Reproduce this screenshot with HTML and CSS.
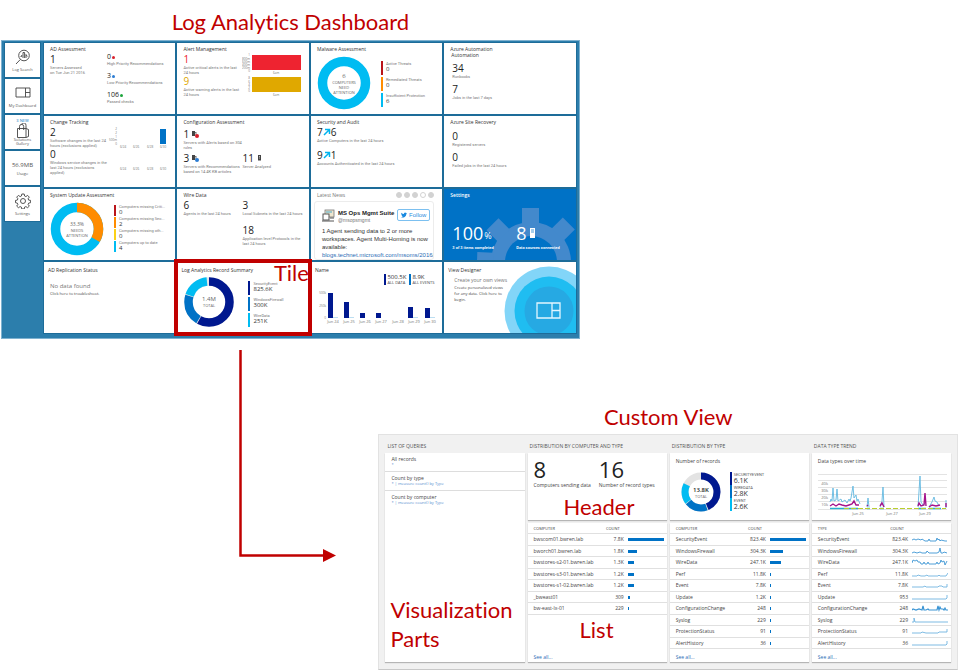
FILE: index.html
```html
<!DOCTYPE html>
<html lang="en">
<head>
<meta charset="utf-8">
<title>Log Analytics Dashboard</title>
<link rel="stylesheet" href="styles.css">
</head>
<body>
<section class="upper">
<h1 class="label title">Log Analytics Dashboard</h1>
<div class="dashboard">
<nav class="side">
  <a href="#"><svg width="16" height="16" viewBox="0 0 16 16" fill="none" stroke="#444" stroke-width=".9"><circle cx="9" cy="6.500" r="5.300"/><path d="M5.300 10.500L1 15M5.500 7.500h1.200V6M8 9V3.500h1.600V9M11 9V5.500l1.300 2"/></svg><span>Log Search</span></a>
  <a href="#"><svg width="16" height="16" viewBox="0 0 16 16" fill="none" stroke="#444" stroke-width=".9"><path d="M1 3h14v9H1zM10.500 3v9M10.500 7.500H15"/></svg><span>My Dashboard</span></a>
  <a href="#" class="gallery"><em>3 NEW</em><svg width="14" height="15" viewBox="0 0 14 15" fill="none" stroke="#444" stroke-width=".9"><path d="M1.500 5.500h8.500v9H1.500zM10 5.500l2.500 1v7L10 14.500M3.500 7V3.500a2 2 0 0 1 4.200 0V7M5.500 1.800a2 2 0 0 1 4.500.8v3"/></svg><span>Solutions<br>Gallery</span></a>
  <a href="#" class="usage"><b>56.9MB</b><span>Usage</span></a>
  <a href="#"><svg width="16" height="16" viewBox="0 0 16 16" fill="none" stroke="#444" stroke-width=".9"><circle cx="8" cy="8" r="2.500"/><path d="M6.800 1h2.400l.4 2 1.300.6 1.700-1.200 1.700 1.700-1.200 1.700.6 1.300 1.900.3v2.300l-1.900.4-.6 1.300 1.200 1.700-1.700 1.600-1.700-1.100-1.300.5-.4 1.900H6.800l-.4-1.900-1.300-.5-1.700 1.100-1.700-1.600 1.200-1.700-.6-1.300L.5 9.700V7.400l1.800-.3.6-1.300-1.200-1.700 1.700-1.700 1.700 1.200L6.400 3z"/></svg><span>Settings</span></a>
</nav>
<main class="tiles">
  <article class="tile"><h2>AD Assessment</h2><div class="cols">
    <div class="stack first"><div class="stat"><b>1</b><p>Servers Assessed<br>on Tue Jun 21 2016</p></div></div>
    <div class="stack checks">
      <div class="stat"><b>0<i class="dot red"></i></b><p>High Priority Recommendations</p></div>
      <div class="stat"><b>3<i class="dot blue"></i></b><p>Low Priority Recommendations</p></div>
      <div class="stat"><b>106<i class="dot green"></i></b><p>Passed checks</p></div>
    </div></div></article>
  <article class="tile"><h2>Alert Management</h2><div class="cols">
    <div class="stack wide"><div class="stat crit"><b>1</b><p>Active critical alerts in the last<br>24 hours</p></div><div class="stat warn"><b>9</b><p>Active warning alerts in the last<br>24 hours</p></div></div>
    <svg class="chart" width="61" height="46" viewBox="0 0 61 46"><rect x="10" y="2" width="49" height="15" fill="#ee2330"/><rect x="10" y="24" width="49" height="15" fill="#e0a800"/><g text-anchor="end"><text x="8" y="3">1</text><text x="8" y="7">800m</text><text x="8" y="10">600m</text><text x="8" y="13">400m</text><text x="8" y="16">200m</text><text x="8" y="19">0</text><text x="8" y="26">8</text><text x="8" y="30">6</text><text x="8" y="33">4</text><text x="8" y="36">2</text><text x="8" y="39">0</text></g><text x="31" y="21">6am</text><text x="31" y="43">6am</text></svg></div></article>
  <article class="tile"><h2>Malware Assessment</h2><div class="cols ring">
    <svg width="54" height="54" viewBox="0 0 54 54"><circle cx="27" cy="27" r="21.500" fill="none" stroke="#00bcf2" stroke-width="9.500"/><g class="core"><text x="27" y="22" class="t6">6</text><text x="27" y="28">COMPUTERS</text><text x="27" y="33">NEED</text><text x="27" y="38">ATTENTION</text></g></svg>
    <ul class="legend tall"><li class="c-red">Active Threats<b>0</b></li><li class="c-orange">Remediated Threats<b>0</b></li><li class="c-cyan">Insufficient Protection<b>6</b></li></ul></div></article>
  <article class="tile"><h2>Azure Automation<br><span class="sub">Automation</span></h2><div class="stack apps">
    <div class="stat"><b>34</b><p>Runbooks</p></div><div class="stat"><b>7</b><p>Jobs in the last 7 days</p></div></div></article>

  <article class="tile"><h2>Change Tracking</h2><div class="cols">
    <div class="stack first"><div class="stat"><b>2</b><p>Software changes in the last 24<br>hours (exclusions applied)</p></div><div class="stat"><b>0</b><p>Windows service changes in the<br>last 24 hours (exclusions<br>applied)</p></div></div>
    <svg class="chart" width="64" height="48" viewBox="0 0 64 48"><rect x="53" y="3" width="6" height="15" fill="#0072c6"/><g text-anchor="end"><text x="10" y="4">2</text><text x="10" y="8">2</text><text x="10" y="12">1</text><text x="10" y="15">500m</text><text x="10" y="19">0</text></g><g text-anchor="middle"><text x="16" y="22">6/24</text><text x="29" y="22">6/26</text><text x="43" y="22">6/28</text><text x="56" y="22">6/30</text><text x="16" y="44">6/24</text><text x="29" y="44">6/26</text><text x="43" y="44">6/28</text><text x="56" y="44">6/30</text></g></svg></div></article>
  <article class="tile"><h2>Configuration Assessment</h2><div class="stack config">
    <div class="stat"><b>1<svg width="8" height="8" viewBox="0 0 8 8"><path d="M1 1h3v5H1z" fill="#444"/><path d="M4 3l1-1v3" stroke="#777" fill="none"/><circle cx="6" cy="6" r="2" fill="#d9202c"/></svg></b><p>Servers with Alerts based on 304<br>rules</p></div>
    <div class="cols"><div class="stat half"><b>3<svg width="8" height="8" viewBox="0 0 8 8"><path d="M1 1h3v5H1z" fill="#444"/><path d="M4 3l1-1v3" stroke="#777" fill="none"/><circle cx="6" cy="6" r="2" fill="#2b7cd3"/></svg></b><p>Servers with Recommendations<br>based on 14.4K KB articles</p></div><div class="stat"><b>11<svg width="8" height="8" viewBox="0 0 8 8"><path d="M2 1h3v5.500H2z" fill="#444"/><path d="M3 2.500h1M3 4h1" stroke="#fff" stroke-width=".6"/></svg></b><p>Server Analyzed</p></div></div></div></article>
  <article class="tile"><h2>Security and Audit</h2><div class="stack audit">
    <div class="stat"><b>7<svg width="8" height="8" viewBox="0 0 8 8"><path d="M1 7l5-5M2 1.500h4.500V6" stroke="#00b4ef" stroke-width="1.500" fill="none"/></svg>6</b><p>Active Computers in the last 24 hours</p></div>
    <div class="stat"><b>9<svg width="8" height="8" viewBox="0 0 8 8"><path d="M1 7l5-5M2 1.500h4.500V6" stroke="#00b4ef" stroke-width="1.500" fill="none"/></svg>1</b><p>Accounts Authenticated in the last 24 hours</p></div></div></article>
  <article class="tile"><h2>Azure Site Recovery</h2><div class="stack apps">
    <div class="stat"><b>0</b><p>Registered servers</p></div><div class="stat"><b>0</b><p>Failed jobs in the last 24 hours</p></div></div></article>

  <article class="tile"><h2>System Update Assessment</h2><div class="cols ring">
    <svg width="54" height="54" viewBox="0 0 54 54"><g fill="none" stroke-width="9.500" transform="rotate(-90 27 27)"><circle cx="27" cy="27" r="21.500" stroke="#00bcf2"/><circle cx="27" cy="27" r="21.500" stroke="#ff8c00" pathLength="360" stroke-dasharray="120 240"/></g><g class="core"><text x="27" y="24" class="t5">33.3%</text><text x="27" y="30">NEEDS</text><text x="27" y="35">ATTENTION</text></g></svg>
    <ul class="legend short"><li class="c-red">Computers missing Criti...<b>0</b></li><li class="c-orange">Computers missing Sec...<b>2</b></li><li class="c-yellow">Computers missing oth...<b>0</b></li><li class="c-cyan">Computers up to date<b>4</b></li></ul></div></article>
  <article class="tile"><h2>Wire Data</h2><div class="cols wire">
    <div class="stat half"><b>6</b><p>Agents in the last 24 hours</p></div>
    <div class="stack"><div class="stat"><b>3</b><p>Local Subnets in the last 24 hours</p></div><div class="stat"><b>18</b><p>Application level Protocols in the<br>last 24 hours</p></div></div></div></article>
  <article class="tile news"><header><h2>Latest News</h2><div class="pager"><button></button><button></button><button></button><button class="on"></button><button></button></div></header>
    <div class="tweet"><div class="who"><svg width="13" height="13" viewBox="0 0 13 13"><rect x="3" y="1" width="9" height="7" fill="#efe6cf" stroke="#777" stroke-width=".8"/><path d="M4 3h6" stroke="#48a9c8"/><rect x="1" y="5" width="6" height="6" fill="#fff" stroke="#555"/><path d="M0 12h12M8 9h4" stroke="#555"/></svg><div><b>MS Ops Mgmt Suite</b><span>@msopsmgmt</span></div><button class="follow"><svg width="6" height="6" viewBox="0 0 24 24"><path fill="#1b8ae0" d="M24 4.600a10 10 0 0 1-2.800.8 5 5 0 0 0 2.100-2.700c-1 .6-2 1-3.100 1.200a4.900 4.900 0 0 0-8.400 4.500A14 14 0 0 1 1.700 3.200a4.900 4.900 0 0 0 1.500 6.500 5 5 0 0 1-2.200-.6 4.900 4.900 0 0 0 4 4.900 5 5 0 0 1-2.300 0 4.900 4.900 0 0 0 4.600 3.500A10 10 0 0 1 0 19.500a14 14 0 0 0 21.500-12.400A10 10 0 0 0 24 4.600z"/></svg>Follow</button></div>
    <p>1 Agent sending data to 2 or more<br>workspaces. Agent Multi-Homing is now<br>available:<br><a href="#">blogs.technet.microsoft.com/msoms/2016/05</a></p></div></article>
  <article class="tile settings"><svg class="gear" width="100" height="54" viewBox="0 0 100 54"><g fill="#4389cc"><circle cx="55" cy="56" r="40"/><path d="M46 2h17v16H46z"/><path d="M46 2h17v16H46z" transform="rotate(-45 55 56)"/><path d="M46 2h17v16H46z" transform="rotate(45 55 56)"/><path d="M46 2h17v16H46z" transform="rotate(-88 55 56)"/></g><circle cx="55" cy="56" r="26" fill="#0072c6"/></svg><h2>Settings</h2><div class="cols"><div class="stat done"><b>100<small>%</small></b><p>3 of 3 items completed</p></div><div class="stat"><b>8<svg width="8" height="10" viewBox="0 0 8 10"><path d="M2 0h5v10H2z" fill="#fff"/><path d="M3 2h3M3 4h3" stroke="#0072c6" stroke-width=".7"/></svg></b><p>Data sources connected</p></div></div></article>

  <article class="tile low"><h2>AD Replication Status</h2><div class="empty"><p>No data found</p><a href="#">Click here to troubleshoot.</a></div></article>
  <article class="tile low marked"><h2>Log Analytics Record Summary</h2><span class="label pin-tile">Tile</span><div class="cols ring record">
    <svg width="50" height="50" viewBox="0 0 50 50"><g fill="none" stroke-width="8.500" transform="rotate(-90 25 25)"><circle cx="25" cy="25" r="20.500" stroke="#e6e6e6"/><circle cx="25" cy="25" r="20.500" stroke="#00188f" pathLength="360" stroke-dasharray="209 151"/><circle cx="25" cy="25" r="20.500" stroke="#0072c6" pathLength="360" stroke-dasharray="76 284" stroke-dashoffset="-211"/><circle cx="25" cy="25" r="20.500" stroke="#00bcf2" pathLength="360" stroke-dasharray="65 295" stroke-dashoffset="-289"/></g><g class="core"><text x="25" y="24" class="t6">1.4M</text><text x="25" y="30">TOTAL</text></g></svg>
    <ul class="legend tall"><li class="c-navy">SecurityEvent<b>825.6K</b></li><li class="c-blue">WindowsFirewall<b>300K</b></li><li class="c-cyan">WireData<b>251K</b></li></ul></div></article>
  <article class="tile low"><h2>Name</h2><div class="events">
    <ul class="totals"><li class="c-navy"><b>500.5K</b>ALL DATA</li><li class="c-blue"><b>8.9K</b>ALL EVENTS</li></ul>
    <svg class="chart" width="124" height="38" viewBox="0 0 124 38"><g fill="#00188f"><path d="M13 6h5v25h-5zM29 15h5v16h-5zM45 26h5v5h-5zM61 26h5v5h-5zM93 20h5v11h-5zM110 21h5v10h-5z"/></g><path d="M18 30.500h5M34 30.500h5M98 30.500h5M115 30.500h5" stroke="#8fc7e8" stroke-width=".6"/><g text-anchor="end"><text x="11" y="7">500k</text><text x="11" y="20">250k</text><text x="11" y="32">0</text></g><g text-anchor="middle" class="t4"><text x="18" y="36">Jun 24</text><text x="34" y="36">Jun 25</text><text x="50" y="36">Jun 26</text><text x="66" y="36">Jun 27</text><text x="83" y="36">Jun 28</text><text x="99" y="36">Jun 29</text><text x="115" y="36">Jun 30</text></g></svg></div></article>
  <article class="tile low designer"><svg class="disc" width="72" height="68" viewBox="0 0 72 68"><circle cx="45" cy="46" r="44.500" fill="#82d5f8"/><circle cx="45" cy="46" r="34.500" fill="#1fbdf1"/><circle cx="45" cy="46" r="24.500" fill="#26a9e3"/><path d="M33 38h23v15H33zM48 38v15M48 45.500h8" fill="none" stroke="#e3f6ff" stroke-width="1.300"/></svg><h2>View Designer</h2><div class="pitch"><h3>Create your own views</h3><p>Create personalized views<br>for any data. Click here to<br>begin.</p></div></article>
</main>
</div>
</section>

<section class="lower">
<div class="link"><svg width="100" height="212" viewBox="0 0 100 212"><path d="M2.500 0v205.500H88" fill="none" stroke="#c00000" stroke-width="2.500"/><path d="M85 199l13 6.500L85 212z" fill="#c00000"/></svg></div>
<div class="detail">
<h1 class="label title">Custom View</h1>
<div class="view">
  <section class="part"><h2>LIST OF QUERIES</h2><div class="card queries">
    <ul><li>All records<a href="#">*</a></li><li>Count by type<a href="#">* | measure count() by Type</a></li><li>Count by computer<a href="#">* | measure count() by Type</a></li></ul>
    <span class="label pin-parts">Visualization<br>Parts</span></div></section>
  <section class="part"><h2>DISTRIBUTION BY COMPUTER AND TYPE</h2>
    <div class="card head"><div class="cols big"><div><b>8</b><p>Computers sending data</p></div><div><b>16</b><p>Number of record types</p></div></div><span class="label pin-header">Header</span></div>
    <div class="card list"><table><thead><tr><th>COMPUTER</th><th>COUNT</th><th></th></tr></thead><tbody>
      <tr><td>bwscom01.bwren.lab</td><td>7.8K</td><td><i style="width:100%"></i></td></tr>
      <tr><td>bworch01.bwren.lab</td><td>1.8K</td><td><i style="width:25%"></i></td></tr>
      <tr><td>bwstores-s2-01.bwren.lab</td><td>1.3K</td><td><i style="width:17%"></i></td></tr>
      <tr><td>bwstores-s3-01.bwren.lab</td><td>1.2K</td><td><i style="width:17%"></i></td></tr>
      <tr><td>bwstores-s1-02.bwren.lab</td><td>1.2K</td><td><i style="width:17%"></i></td></tr>
      <tr><td>_bweast01</td><td>309</td><td><i style="width:5%"></i></td></tr>
      <tr><td>bw-east-lx-01</td><td>229</td><td><i style="width:4%"></i></td></tr>
    </tbody></table><span class="label pin-list">List</span><a class="all" href="#">See all...</a></div></section>
  <section class="part"><h2>DISTRIBUTION BY TYPE</h2>
    <div class="card head"><h3>Number of records</h3><div class="cols types">
      <svg width="40" height="40" viewBox="0 0 40 40"><g fill="none" stroke-width="7" transform="rotate(-90 20 20)"><circle cx="20" cy="20" r="16" stroke="#e3e3e3"/><circle cx="20" cy="20" r="16" stroke="#00188f" pathLength="360" stroke-dasharray="157 203"/><circle cx="20" cy="20" r="16" stroke="#0072c6" pathLength="360" stroke-dasharray="71 289" stroke-dashoffset="-160"/><circle cx="20" cy="20" r="16" stroke="#00bcf2" pathLength="360" stroke-dasharray="64 296" stroke-dashoffset="-233"/></g><g class="core"><text x="20" y="20" class="t6 strong">13.8K</text><text x="20" y="26">TOTAL</text></g></svg>
      <ul class="legend kinds"><li class="c-navy">SECURITYEVENT<b>6.1K</b></li><li class="c-blue">WIREDATA<b>2.8K</b></li><li class="c-cyan">EVENT<b>2.6K</b></li></ul></div></div>
    <div class="card list"><table><thead><tr><th>COMPUTER</th><th>COUNT</th><th></th></tr></thead><tbody>
      <tr><td>SecurityEvent</td><td>823.4K</td><td><i style="width:100%"></i></td></tr>
      <tr><td>WindowsFirewall</td><td>304.3K</td><td><i style="width:37%"></i></td></tr>
      <tr><td>WireData</td><td>247.1K</td><td><i style="width:30%"></i></td></tr>
      <tr><td>Perf</td><td>11.8K</td><td><i style="width:2%"></i></td></tr>
      <tr><td>Event</td><td>7.8K</td><td><i style="width:2%"></i></td></tr>
      <tr><td>Update</td><td>1.2K</td><td><i style="width:2%"></i></td></tr>
      <tr><td>ConfigurationChange</td><td>248</td><td><i style="width:2%"></i></td></tr>
      <tr><td>Syslog</td><td>229</td><td><i style="width:2%"></i></td></tr>
      <tr><td>ProtectionStatus</td><td>91</td><td><i style="width:2%"></i></td></tr>
      <tr><td>AlertHistory</td><td>36</td><td><i style="width:2%"></i></td></tr>
    </tbody></table><a class="all" href="#">See all...</a></div></section>
  <section class="part"><h2>DATA TYPE TREND</h2>
    <div class="card head"><h3>Data types over time</h3>
      <svg class="chart trend" width="130" height="44" viewBox="0 0 130 44"><path d="M0 1.500h129M0 7.500h129M0 14.500h129M0 21.500h129M0 28.500h129M0 36.500h129" stroke="#dcdcdc" stroke-width=".8"/><g class="t4" text-anchor="end"><text x="10" y="12">40k</text><text x="10" y="19">30k</text><text x="10" y="26">20k</text><text x="10" y="33">10k</text></g>
      <g fill="none" stroke-width=".9"><path stroke="#62b8e0" d="M12 29l1-3 1 2 1-13 1 13 2-1 1-11 1 12 3-2 1 3 3-2 2 3 2-4 1 2 1-3 2-12 1 12 2-3 1 6 1-2 2 5M49 34l1-9 1 9M62 34l2-6 1-14 1 20M100 34l2-31 1 26 2 3 2-2M111 34l3-5 2-5 1 4 2 1 2 4M128 35V27"/><path stroke="#a4148c" stroke-width="1.400" d="M12 33l3-2 3 2 3-2 3 1 4 1 3-1 3-1 2-3 2 4 3 0M49 33l1-1M62 33l2-3 2 4M100 33l1-3 2 3 3-1 1-12 1 13M111 34l3-2 4 1 4-1M128 34v-4"/><path stroke="#25afd0" stroke-width="1.500" d="M12 35.500h28M49 35.500h3M62 35.500h4M100 35.500h8M111 35.500h12"/><path stroke="#b9ce2d" stroke-width="1.200" stroke-dasharray="5 2" d="M26 35.500h102"/></g><g class="t4" text-anchor="middle"><text x="40" y="42">Jun 25</text><text x="74" y="42">Jun 27</text><text x="107" y="42">Jun 29</text></g></svg></div>
    <div class="card list"><table><thead><tr><th>TYPE</th><th>COUNT</th><th></th></tr></thead><tbody>
      <tr><td>SecurityEvent</td><td>823.4K</td><td><svg class="spark" viewBox="0 0 36 7"><path d="M0 4l2-1 2 1 2-1 3 1 1-1 3 2h3l1-2 1 2h6l1-3 1 2 1-1 1 2 1-1 4 1h2"/></svg></td></tr>
      <tr><td>WindowsFirewall</td><td>304.3K</td><td><svg class="spark" viewBox="0 0 36 7"><path d="M0 5l2-1 3 1 3-1 2 1h4l1-2 2 2h8l2-1 1-4 1 5h2l1-1 3 1"/></svg></td></tr>
      <tr><td>WireData</td><td>247.1K</td><td><svg class="spark" viewBox="0 0 36 7"><path d="M0 4l1-3 2 1 2-1 1 2h2l1 2h2l1-2 1 2h2l1-2 1 2h7l1-2 1 2 2-1 1-3 1 2 2-1 1 4 2-4"/></svg></td></tr>
      <tr><td>Perf</td><td>11.8K</td><td><svg class="spark soft" viewBox="0 0 36 7"><path d="M0 5h5l1-1 3 1h4l2-1 1 1h10l1-1 1 1h6l2-3"/></svg></td></tr>
      <tr><td>Event</td><td>7.8K</td><td><svg class="spark soft" viewBox="0 0 36 7"><path d="M0 5h11l2-1 1 1h12l1-1h3l1 1h4V2"/></svg></td></tr>
      <tr><td>Update</td><td>953</td><td><svg class="spark soft" viewBox="0 0 36 7"><path d="M0 5h34l1-1V1"/></svg></td></tr>
      <tr><td>ConfigurationChange</td><td>248</td><td><svg class="spark strong" viewBox="0 0 36 7"><path d="M0 5l1-1 3 1 3-1 3 1 1-4 1 4h2l2-1 1 1h8l1-4 1 4 1-3 1 2h2l1 1 1-2 1 2h2"/></svg></td></tr>
      <tr><td>Syslog</td><td>229</td><td><svg class="spark soft" viewBox="0 0 36 7"><path d="M0 5h2V1l1 4h33"/></svg></td></tr>
      <tr><td>ProtectionStatus</td><td>91</td><td><svg class="spark soft" viewBox="0 0 36 7"><path d="M0 5h9l1-1 4 1h12l1-1h8V1"/></svg></td></tr>
      <tr><td>AlertHistory</td><td>36</td><td><svg class="spark soft" viewBox="0 0 36 7"><path d="M0 5h34l1-1V1"/></svg></td></tr>
    </tbody></table><a class="all" href="#">See all...</a></div></section>
</div>
</div>
</section>
</body>
</html>
```
FILE: styles.css
```css
* { box-sizing: border-box; }
body { margin: 0; background: #fff; color: #444; font: 4px/4px "Open Sans", "Noto Sans", sans-serif; }
h1, h2, h3, p, ul { margin: 0; padding: 0; font-weight: 400; }
ul { list-style: none; }
a { color: #2b6cb5; text-decoration: none; }
button { margin: 0; padding: 0; font: inherit; }
svg { display: block; flex: none; }
b { font-weight: 400; }

.label { color: #c00000; font: 22px/29px "Lato", sans-serif; font-variant-ligatures: none; white-space: nowrap; }
.title { text-align: center; }
.upper { width: 60.4%; padding: 7px 0 0 1px; }
.upper .title { height: 33px; }

.dashboard { display: flex; gap: 4px; padding: 2px 3px 5px; background: #2c7eac; border: 1px solid #7fb2d0; }
.side { display: flex; flex-direction: column; gap: 2px; flex: 0 0 35px; }
.side a { display: flex; flex-direction: column; align-items: center; justify-content: center; gap: 3px; height: 34px; background: #fff; color: #555; text-align: center; box-shadow: 0 0 0 1px #1d6c99; }
.side .gallery { gap: 0; }
.side em { color: #0b7bc4; font-style: normal; }
.side b { font-size: 6px; line-height: 8px; }

.tiles { flex: 1; min-width: 0; display: grid; grid-template-columns: repeat(4, minmax(0, 1fr)); grid-auto-rows: minmax(71px, auto); gap: 2px; }
.tile { position: relative; padding: 2px 6px 0; background: #fff; box-shadow: 0 0 0 1px #1d6c99; white-space: nowrap; }
.tile h2 { font-size: 5px; line-height: 8px; color: #333; }
.tile .sub { display: block; padding-left: 1px; line-height: 5px; }
.cols { display: flex; }
.stack { display: flex; flex-direction: column; }
.first { flex: 0 0 57px; }
.wide { flex: 0 0 59px; }
.half { flex: 0 0 59px; }
.stat b { display: flex; align-items: center; gap: 2px; font-size: 10px; line-height: 12px; color: #222; }
.stat p, .legend li { font-family: "Roboto", sans-serif; }
.stat p { line-height: 5px; color: #777; }
.legend b { font-family: "Open Sans", sans-serif; }
.checks { gap: 6px; }
.checks b { gap: 1px; font-size: 7px; line-height: 8px; }
.dot { width: 3px; height: 3px; border-radius: 50%; }
.red { background: #d9202c; }
.blue { background: #2b7cd3; }
.green { background: #1da53c; }
.crit b { color: #ee2330; }
.warn b { color: #e0a800; }
.chart text { font-size: 3px; fill: #777; }
.chart .t4 text { font-size: 4px; }
.core { text-anchor: middle; fill: #666; }
.core .t5 { font-size: 5px; }
.core .t6 { font-size: 6px; }
.core .strong { fill: #222; font-weight: 600; }

.ring { padding-top: 3px; gap: 10px; }
.legend { display: flex; flex-direction: column; }
.legend li { padding-left: 3px; border-left: 2px solid; color: #777; }
.legend b { display: block; font-size: 6px; line-height: 7px; color: #333; }
.tall { gap: 2px; padding-top: 5px; }
.tall li { height: 14px; padding-top: 1px; }
.short { gap: 1px; padding-top: 3px; }
.short li { height: 11px; }
.legend .c-red { border-color: #ba141a; }
.legend .c-orange { border-color: #ff8c00; }
.legend .c-yellow { border-color: #fcd116; }
.legend .c-cyan { border-color: #00bcf2; }
.legend .c-navy, .totals .c-navy { border-color: #00188f; }
.legend .c-blue, .totals .c-blue { border-color: #0072c6; }

.apps { gap: 4px; padding: 4px 0 0 2px; }
.config { gap: 2px; padding-top: 2px; }
.audit { gap: 6px; }
.audit b { gap: 0; }
.wire .stack { gap: 8px; }

.news { padding: 2px 8px 0 3px; overflow: hidden; }
.news header { display: flex; justify-content: space-between; align-items: center; padding-left: 3px; }
.news h2 { color: #777; }
.pager { display: flex; gap: 2px; }
.pager button { width: 6px; height: 6px; border: 1px solid #d2d2d2; border-radius: 50%; background: #d2d2d2; }
.pager .on { background: #fff; }
.tweet { margin-top: 2px; padding: 7px 0 0 7px; height: 59px; border: 1px solid #ececec; border-radius: 3px; overflow: hidden; font-family: "Liberation Sans", sans-serif; }
.who { display: flex; gap: 3px; padding-right: 7px; }
.who div { flex: 1; }
.who b { display: block; font-size: 6px; line-height: 8px; font-weight: 700; color: #222; }
.who span { font-size: 5px; line-height: 6px; color: #777; }
.follow { display: flex; flex: none; align-items: center; justify-content: center; gap: 2px; width: 33px; height: 12px; border: 1px solid #7cc0f0; border-radius: 2px; background: #fff; color: #2b8ede; font-size: 6px; }
.tweet p { margin-top: 4px; font-size: 6px; line-height: 8px; color: #333; }

.settings { background: #0072c6; color: #fff; overflow: hidden; }
.settings h2, .settings p { position: relative; color: #fff; font-weight: 600; }
.settings .cols { position: relative; padding: 22px 0 0 2px; }
.settings b { font-size: 18px; line-height: 24px; color: #fff; }
.settings small { font-size: 9px; align-self: flex-end; line-height: 18px; }
.settings .stat b { gap: 1px; }
.settings .done { flex: 0 0 64px; }
.gear { position: absolute; right: 0; bottom: 0; }

.low { padding: 4px 4px 0; }
.empty { padding: 8px 2px 0; line-height: 8px; }
.empty p { font-size: 6px; color: #777; }
.empty a { color: #444; }
.marked { z-index: 2; outline: 4px solid #c00000; outline-offset: -1px; }
.pin-tile { position: absolute; top: -4px; right: 0; }
.record { gap: 14px; padding: 3px 3px 0; }
.record .legend { padding-top: 4px; }
.totals { display: flex; justify-content: flex-end; gap: 3px; padding-right: 4px; }
.totals li { padding-left: 1px; border-left: 2px solid; line-height: 4px; }
.totals b { display: block; font-size: 6px; line-height: 7px; color: #333; }
.events .chart { margin-top: 2px; }
.designer { overflow: hidden; }
.disc { position: absolute; right: 0; bottom: 0; }
.pitch { position: relative; padding: 1px 0 0 6px; }
.pitch h3 { font-size: 5px; line-height: 10px; color: #777; }
.pitch p { line-height: 6px; }

.lower { display: grid; grid-template-columns: 39.5% 1fr; padding-right: 2px; }
.link { padding: 11px 0 0 63%; }
.detail { padding-top: 63px; }
.detail .title { height: 32px; }
.view { display: grid; grid-template-columns: repeat(4, minmax(0, 1fr)); gap: 3px; padding: 6px 6px 7px; background: #f1f1f1; border: 1px solid #e2e2e2; border-bottom-color: #c8c8c8; white-space: nowrap; }
.part { display: flex; flex-direction: column; }
.part h2 { padding-left: 2px; height: 12px; font-size: 5px; line-height: 10px; color: #555; }
.card { position: relative; background: #fff; box-shadow: 0 1px 1px #b5b5b5; }
.queries { flex: 1; }
.queries li { height: 19px; padding: 4px 6px 0; font-size: 5px; line-height: 5px; border-bottom: 1px solid #ddd; }
.queries li:last-child { border: 0; }
.queries a { display: block; font-size: 4px; line-height: 6px; color: #5a8fd0; }
.head { height: 67px; margin-bottom: 3px; padding: 4px 6px 0; }
.head h3 { font-size: 5px; line-height: 8px; }
.big { gap: 8px; }
.big b { display: block; font-size: 22px; line-height: 25px; color: #222; }
.big p { font-size: 5px; line-height: 6px; }
.types { gap: 9px; padding: 7px 0 0 5px; }
.kinds b { font-size: 7px; line-height: 8px; }
.kinds li { padding-left: 2px; height: 13px; line-height: 5px; color: #555; }
.trend { margin-top: 8px; }
.list { flex: 1; display: flex; flex-direction: column; min-height: 139px; }
table { width: 100%; border-collapse: separate; border-spacing: 0; table-layout: fixed; }
th, td { height: 12px; padding: 0; border-bottom: 1px solid #e0e0e0; font-size: 5px; line-height: 5px; font-weight: 400; text-align: left; }
tr:nth-child(even) td, th { height: 11px; }
th { font-size: 4px; }
th:first-child, td:first-child { padding-left: 6px; }
th:nth-child(2), td:nth-child(2) { width: 25px; text-align: right; }
th:nth-child(2) { padding-right: 4px; }
th:last-child, td:last-child { width: 43px; padding: 0 3px 0 4px; }
td i { display: block; height: 3px; min-width: 1px; background: #0072c6; }
.spark { width: 100%; height: 7px; fill: none; stroke: #3c95d4; stroke-width: .9; }
.soft { stroke: #6fb3e0; }
.strong { stroke-width: 1.2; }
.all { margin-top: auto; padding: 0 6px 2px; font-size: 5px; line-height: 6px; }
.pin-parts { position: absolute; left: 5px; bottom: 9px; }
.pin-header { position: absolute; left: 36px; bottom: -1px; }
.pin-list { position: absolute; left: 52px; bottom: 18px; }
```
